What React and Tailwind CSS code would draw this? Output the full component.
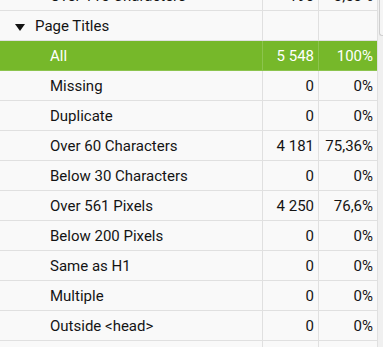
const rows = [
  { label: 'All', count: '5 548', pct: '100%', active: true },
  { label: 'Missing', count: '0', pct: '0%' },
  { label: 'Duplicate', count: '0', pct: '0%' },
  { label: 'Over 60 Characters', count: '4 181', pct: '75,36%' },
  { label: 'Below 30 Characters', count: '0', pct: '0%' },
  { label: 'Over 561 Pixels', count: '4 250', pct: '76,6%' },
  { label: 'Below 200 Pixels', count: '0', pct: '0%' },
  { label: 'Same as H1', count: '0', pct: '0%' },
  { label: 'Multiple', count: '0', pct: '0%' },
  { label: 'Outside <head>', count: '0', pct: '0%' },
];

function Row({ label, count, pct, active, indent = 'pl-[50px]', icon }) {
  const base = active ? 'bg-[#76b82a] text-white' : 'bg-[#f9f9f9] text-[#141414]';
  const line = active ? 'border-[#8cc44e]' : 'border-[#e0e0e0]';
  return (
    <div className={`flex shrink-0 h-[30px] border-b ${line} ${base}`}>
      <div className={`w-[263px] flex items-center pt-[2px] border-r ${line} ${indent}`}>
        {icon}
        <span>{label}</span>
      </div>
      <div className={`w-[56px] flex items-center justify-end pt-[2px] pr-[4px] border-r ${line}`}>{count}</div>
      <div className="w-[58px] flex items-center justify-end pt-[2px] pr-[4px]">{pct}</div>
    </div>
  );
}

export default function App() {
  return (
    <div
      className="w-[383px] h-[347px] overflow-hidden flex bg-[#f9f9f9] text-[15px] leading-none"
      style={{ fontFamily: 'Roboto, "Liberation Sans", sans-serif' }}
    >
      <div className="w-[377px] flex flex-col -mt-[19px]">
        <Row label="Over 115 Characters" count="196" pct="3,53%" />
        <Row
          label="Page Titles"
          count=""
          pct=""
          indent="pl-[15px]"
          icon={
            <svg width="10" height="7" viewBox="0 0 10 7" className="mr-[10px] mt-[1px]">
              <polygon points="0,0 10,0 5,7" fill="#141414" />
            </svg>
          }
        />
        {rows.map((r) => (
          <Row key={r.label} {...r} />
        ))}
        <Row label="" count="" pct="" />
      </div>
      <div className="w-[6px] bg-[#f0f0f0] border-l border-[#e0e0e0] flex">
        <div className="ml-[1px] w-[5px] h-[38px] bg-[#f5f5f5] border-l border-b border-t border-[#cfcfcf] rounded-bl-[3px] -mt-[2px]" />
      </div>
    </div>
  );
}
